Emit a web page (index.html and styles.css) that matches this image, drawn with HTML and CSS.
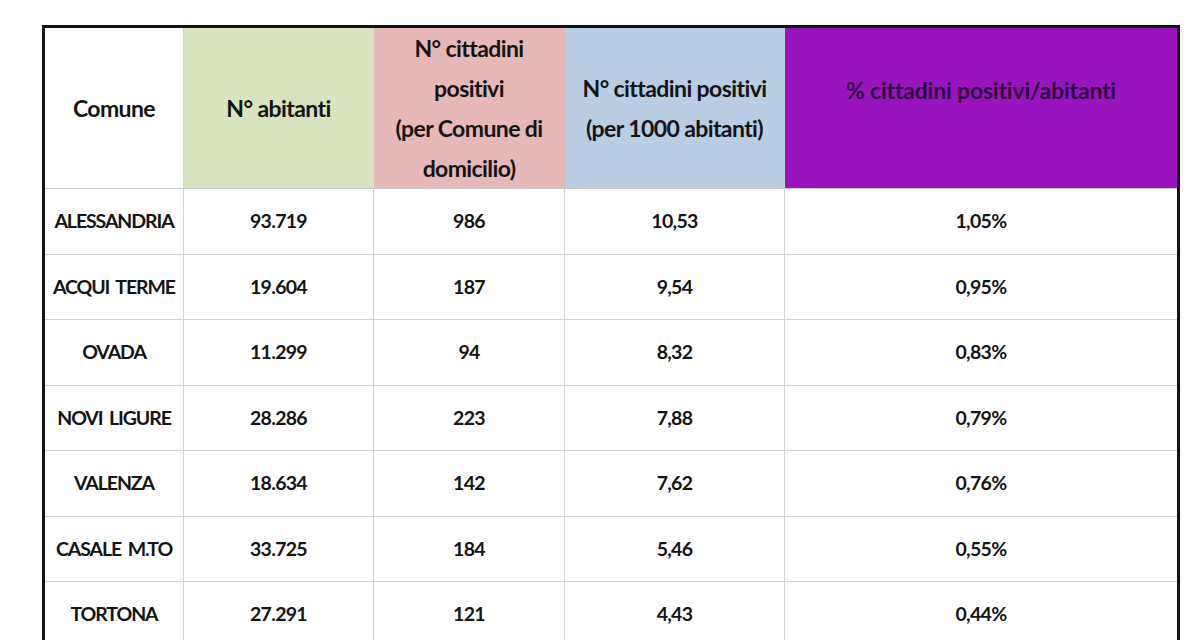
FILE: index.html
```html
<!DOCTYPE html>
<html lang="it">
<head>
<meta charset="utf-8">
<title>Cittadini positivi per Comune</title>
<link rel="stylesheet" href="styles.css">
</head>
<body>
<main class="page">
  <table class="data">
    <colgroup>
      <col class="c1"><col class="c2"><col class="c3"><col class="c4"><col class="c5">
    </colgroup>
    <thead>
      <tr>
        <th class="h-comune">Comune</th>
        <th class="h-green">N° abitanti</th>
        <th class="h-pink">N° cittadini<br>positivi<br>(per Comune di<br>domicilio)</th>
        <th class="h-blue">N° cittadini positivi<br>(per 1000 abitanti)</th>
        <th class="h-purple">% cittadini positivi/abitanti</th>
      </tr>
    </thead>
    <tbody>
      <tr><td class="name">ALESSANDRIA</td><td>93.719</td><td>986</td><td>10,53</td><td>1,05%</td></tr>
      <tr><td class="name">ACQUI TERME</td><td>19.604</td><td>187</td><td>9,54</td><td>0,95%</td></tr>
      <tr><td class="name">OVADA</td><td>11.299</td><td>94</td><td>8,32</td><td>0,83%</td></tr>
      <tr><td class="name">NOVI LIGURE</td><td>28.286</td><td>223</td><td>7,88</td><td>0,79%</td></tr>
      <tr><td class="name">VALENZA</td><td>18.634</td><td>142</td><td>7,62</td><td>0,76%</td></tr>
      <tr><td class="name">CASALE M.TO</td><td>33.725</td><td>184</td><td>5,46</td><td>0,55%</td></tr>
      <tr><td class="name">TORTONA</td><td>27.291</td><td>121</td><td>4,43</td><td>0,44%</td></tr>
    </tbody>
  </table>
</main>
</body>
</html>
```

FILE: styles.css
```css
html, body {
  margin: 0;
  padding: 0;
  background: #ffffff;
  overflow: hidden;
}

.page {
  padding: 25px 0 0 42px;
  height: 640px;
  box-sizing: border-box;
}

.data {
  width: 1138px;
  table-layout: fixed;
  border-collapse: separate;
  border-spacing: 0;
  border: 3px solid #141414;
  border-bottom: none;
  font-family: Lato, "Liberation Sans", sans-serif;
  font-weight: 700;
  color: #141414;
}

.c1 { width: 139px; }
.c2 { width: 190px; }
.c3 { width: 191px; }
.c4 { width: 220px; }
.c5 { width: 392px; }

.data th,
.data td {
  padding: 0;
  text-align: center;
  vertical-align: middle;
  border-right: 1px solid #d2d2d2;
  border-bottom: 1px solid #d2d2d2;
  box-sizing: border-box;
}

.data th:last-child,
.data td:last-child {
  border-right: none;
}

.data thead th {
  height: 159px;
  font-size: 23px;
  line-height: 40px;
  font-weight: 700;
  letter-spacing: -0.6px;
  border-bottom-color: #c9c9c9;
}

.data tbody td {
  height: 65.5px;
  font-size: 19.5px;
  line-height: 24px;
  letter-spacing: -0.7px;
}

.data tbody .name {
  letter-spacing: -1.1px;
  word-spacing: 3px;
}

.h-comune { background: #ffffff; }
.h-green  { background: #d7e4bd; border-right-color: #d7e4bd !important; }
.h-pink   { background: #e6b9b8; border-right-color: #e6b9b8 !important; }
.h-blue   { background: #b9cde5; border-right-color: #b9cde5 !important; }
.data .h-purple {
  background: #9a14bd;
  color: #2c0640;
  vertical-align: top;
  padding-top: 42px;
  letter-spacing: -0.2px;
}
```
